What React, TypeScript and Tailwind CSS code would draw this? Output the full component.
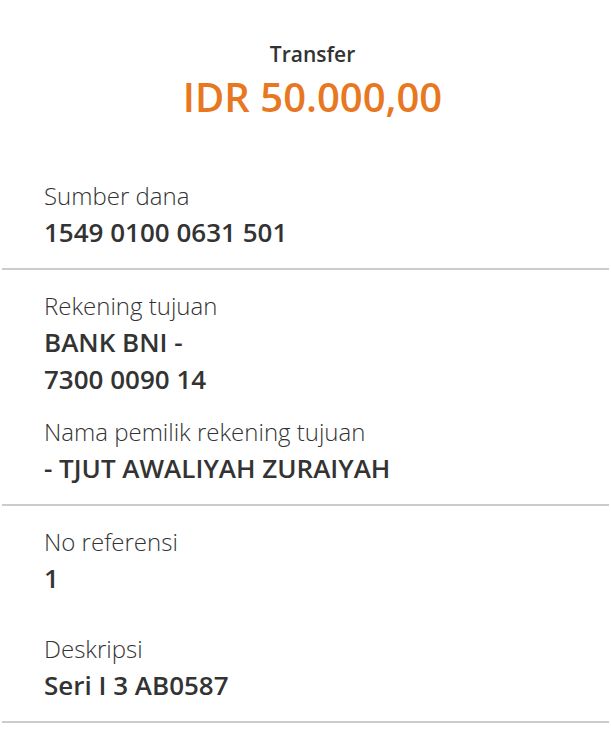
import React from "react";

type Field = { label: string; value: string[]; className?: string };

const sections: Field[][] = [
  [{ label: "Sumber dana", value: ["1549 0100 0631 501"] }],
  [
    { label: "Rekening tujuan", value: ["BANK BNI -", "7300 0090 14"] },
    { label: "Nama pemilik rekening tujuan", value: ["- TJUT AWALIYAH ZURAIYAH"] },
  ],
  [
    { label: "No referensi", value: ["1"], className: "mb-[18px]" },
    { label: "Deskripsi", value: ["Seri I 3 AB0587"] },
  ],
];

export default function App() {
  return (
    <main
      className="min-h-[730px] w-[611px] bg-white text-[#333333]"
      style={{ fontFamily: '"Open Sans", "Liberation Sans", sans-serif' }}
    >
      {/* Header */}
      <header className="flex flex-col items-center pt-[39px] pl-[14px]">
        <p className="text-[21px] leading-[30px] font-semibold">Transfer</p>
        <p className="mt-[3px] text-[40px] leading-[50px] font-semibold text-[#e87722]">
          IDR 50.000,00
        </p>
      </header>

      <div className="mt-[38px]">
        {sections.map((fields, i) => (
          <section key={i} className="mx-[2px] border-b-2 border-[#cccccc] py-[17px]">
            <div className="flex flex-col gap-[15px] pl-[42px]">
              {fields.map((f) => (
                <div key={f.label} className={f.className}>
                  <p className="text-[24px] leading-[37px] font-light">{f.label}</p>
                  {f.value.map((v) => (
                    <p key={v} className="text-[26px] leading-[37px] font-semibold">
                      {v}
                    </p>
                  ))}
                </div>
              ))}
            </div>
          </section>
        ))}
      </div>
    </main>
  );
}
